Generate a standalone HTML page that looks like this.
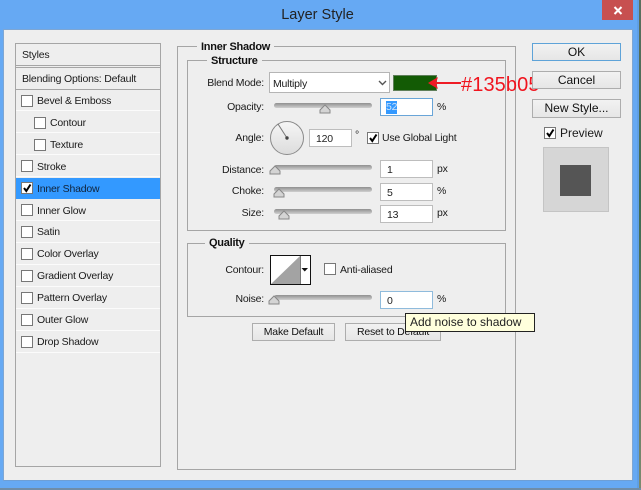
<!DOCTYPE html>
<html><head><meta charset="utf-8"><style>
*{box-sizing:border-box}
html,body{margin:0;padding:0}
body{width:641px;height:490px;position:relative;overflow:hidden;background:#66a9f3;font:10.5px "Liberation Sans",sans-serif;letter-spacing:-.2px;color:#1a1a1a}
div,span{position:absolute}
.t{white-space:nowrap;line-height:14px;height:14px}
.r{text-align:right;width:90px}
.b{font-weight:bold;font-size:11px;letter-spacing:-.25px;background:#eeeeee;padding:0 4px;color:#111}
.big{letter-spacing:0;font-size:12px}
.row{left:16px;width:144px;height:22px;border-bottom:1px solid #fbfbfb}
.cb{width:12px;height:12px;background:#fff;border:1px solid #777}
.g{border:1px solid #a5a5a5}
.inp{background:#fff;border:1px solid #bdbdbd;width:53px;height:18px;padding:2px 0 0 6px;line-height:14px;color:#222}
.btn{border:1px solid #adadad;background:linear-gradient(#f2f2f2,#e6e6e6);text-align:center;color:#111}
.track{left:274px;width:98px;height:5px;border-radius:3px;background:linear-gradient(#8f8f8f,#b5b5b5 60%,#cfcfcf)}
svg{position:absolute;overflow:visible}
</style></head><body>
<div style="left:637px;top:0;width:2px;height:490px;background:#5f9fe6"></div>
<div style="left:639px;top:0;width:2px;height:490px;background:linear-gradient(#5b6f5f,#3c6a50 40%,#7c8a70)"></div>
<div style="left:0;top:488px;width:641px;height:2px;background:#6f8da8"></div>
<div class="t" style="left:0;width:635px;top:6px;height:18px;line-height:18px;text-align:center;font-size:14.5px;letter-spacing:0;color:#222">Layer Style</div>
<div style="left:602px;top:0;width:31px;height:20px;background:#c75050"></div>
<svg style="left:613px;top:6px" width="10" height="9"><path d="M1.500 1L8.500 8M8.500 1L1.500 8" stroke="#fff" stroke-width="2"/></svg>
<div style="left:3px;top:29px;width:630px;height:452px;background:#eeeeee;border:1px solid #7ea6d3;border-bottom-color:#6d9fd6"></div>

<div class="g" style="left:15px;top:43px;width:146px;height:424px"></div>
<div class="t" style="left:22px;top:48px">Styles</div>
<div style="left:16px;top:65px;width:144px;height:1px;background:#a5a5a5"></div>
<div style="left:16px;top:67px;width:144px;height:1px;background:#a5a5a5"></div>
<div class="t" style="left:22px;top:72px">Blending Options: Default</div>
<div style="left:16px;top:89px;width:144px;height:1px;background:#a5a5a5"></div>
<div class="row" style="top:90px;height:21px"></div><div class="cb" style="left:21px;top:95px"></div><div class="t" style="left:37px;top:94px">Bevel &amp; Emboss</div>
<div class="row" style="top:111px"></div><div class="cb" style="left:34px;top:117px"></div><div class="t" style="left:50px;top:116px">Contour</div>
<div class="row" style="top:133px"></div><div class="cb" style="left:34px;top:139px"></div><div class="t" style="left:50px;top:138px">Texture</div>
<div class="row" style="top:155px"></div><div class="cb" style="left:21px;top:160px"></div><div class="t" style="left:37px;top:160px">Stroke</div>
<div style="left:16px;top:178px;width:144px;height:21px;background:#3399ff"></div><div class="cb" style="left:21px;top:182px"></div>
<svg style="left:21px;top:182px" width="12" height="12"><path d="M3 6L5.300 9L9.500 2.500" fill="none" stroke="#000" stroke-width="2"/></svg>
<div class="t" style="left:37px;top:182px;color:#10233a">Inner Shadow</div>
<div class="row" style="top:199px"></div><div class="cb" style="left:21px;top:204px"></div><div class="t" style="left:37px;top:204px">Inner Glow</div>
<div class="row" style="top:221px"></div><div class="cb" style="left:21px;top:226px"></div><div class="t" style="left:37px;top:225px">Satin</div>
<div class="row" style="top:243px"></div><div class="cb" style="left:21px;top:248px"></div><div class="t" style="left:37px;top:247px">Color Overlay</div>
<div class="row" style="top:265px"></div><div class="cb" style="left:21px;top:270px"></div><div class="t" style="left:37px;top:269px">Gradient Overlay</div>
<div class="row" style="top:287px"></div><div class="cb" style="left:21px;top:292px"></div><div class="t" style="left:37px;top:291px">Pattern Overlay</div>
<div class="row" style="top:309px"></div><div class="cb" style="left:21px;top:314px"></div><div class="t" style="left:37px;top:313px">Outer Glow</div>
<div class="row" style="top:331px"></div><div class="cb" style="left:21px;top:336px"></div><div class="t" style="left:37px;top:335px">Drop Shadow</div>

<div class="g" style="left:177px;top:46px;width:339px;height:424px"></div>
<div class="t b" style="left:197px;top:40px">Inner Shadow</div>
<div class="g" style="left:187px;top:60px;width:319px;height:171px"></div>
<div class="t b" style="left:207px;top:54px">Structure</div>
<div class="g" style="left:187px;top:243px;width:319px;height:74px"></div>
<div class="t b" style="left:205px;top:236px">Quality</div>

<div class="t r" style="left:174px;top:76px">Blend Mode:</div>
<div style="left:269px;top:72px;width:121px;height:21px;background:#fff;border:1px solid #b5b5b5"></div>
<div class="t" style="left:273px;top:77px">Multiply</div>
<svg style="left:378px;top:80px" width="9" height="6"><path d="M1 1L4.500 4.500L8 1" fill="none" stroke="#555" stroke-width="1.400"/></svg>
<div style="left:393px;top:75px;width:44px;height:16px;background:#135b05;border:1px solid #5f7f5a"></div>
<svg style="left:427px;top:76px" width="36" height="14"><path d="M34 7H6" stroke="#ee1c25" stroke-width="2"/><path d="M1 7L11 1L9 7L11 13Z" fill="#ee1c25"/></svg>
<div class="t" style="left:461px;top:74px;height:22px;line-height:22px;font-size:20px;letter-spacing:.1px;color:#f0141e">#135b05</div>

<div class="t r" style="left:174px;top:100px">Opacity:</div>
<div class="track" style="top:103px"></div>
<svg style="left:319px;top:104px" width="12" height="10"><path d="M1 9V6L6 1L11 6V9Z" fill="#d4d4d4" stroke="#888"/></svg>
<div class="inp" style="left:380px;top:98px;border-color:#69a5d8"></div>
<div style="left:386px;top:101px;width:11px;height:13px;background:#3399ff"></div>
<div class="t" style="left:386px;top:100px;color:#cfe4fa">52</div>
<div class="t" style="left:437px;top:100px">%</div>

<div class="t r" style="left:174px;top:131px">Angle:</div>
<svg style="left:269px;top:120px" width="36" height="36"><defs><linearGradient id="d" x1="0" y1="0" x2="0" y2="1"><stop offset="0" stop-color="#f6f6f6"/><stop offset="1" stop-color="#dcdcdc"/></linearGradient></defs><circle cx="18" cy="18" r="16.500" fill="url(#d)" stroke="#8a8a8a"/><path d="M18 18L9 4" stroke="#777" stroke-width="1"/><circle cx="18" cy="18" r="1.700" fill="#444"/></svg>
<div class="inp" style="left:309px;top:129px;width:43px;padding-left:6px">120</div>
<div class="t" style="left:355px;top:128px">°</div>
<div class="cb" style="left:367px;top:132px"></div>
<svg style="left:367px;top:132px" width="12" height="12"><path d="M3 6L5.300 9L9.500 2.500" fill="none" stroke="#000" stroke-width="2"/></svg>
<div class="t" style="left:382px;top:131px">Use Global Light</div>

<div class="t r" style="left:174px;top:163px">Distance:</div>
<div class="track" style="top:165px"></div>
<svg style="left:269px;top:165px" width="12" height="10"><path d="M1 9V6L6 1L11 6V9Z" fill="#d4d4d4" stroke="#888"/></svg>
<div class="inp" style="left:380px;top:160px">1</div><div class="t" style="left:437px;top:162px">px</div>

<div class="t r" style="left:174px;top:184px">Choke:</div>
<div class="track" style="top:187px"></div>
<svg style="left:273px;top:188px" width="12" height="10"><path d="M1 9V6L6 1L11 6V9Z" fill="#d4d4d4" stroke="#888"/></svg>
<div class="inp" style="left:380px;top:183px">5</div><div class="t" style="left:437px;top:184px">%</div>

<div class="t r" style="left:174px;top:206px">Size:</div>
<div class="track" style="top:209px"></div>
<svg style="left:278px;top:210px" width="12" height="10"><path d="M1 9V6L6 1L11 6V9Z" fill="#d4d4d4" stroke="#888"/></svg>
<div class="inp" style="left:380px;top:205px">13</div><div class="t" style="left:437px;top:206px">px</div>

<div class="t r" style="left:174px;top:263px">Contour:</div>
<div style="left:270px;top:255px;width:41px;height:30px;background:#fff;border:1px solid #111"></div>
<svg style="left:271px;top:256px" width="39" height="28"><path d="M0 28L29 0V28Z" fill="#a3a3a3"/><path d="M29.500 0V28" stroke="#777"/><path d="M30.500 12H37L33.750 15.500Z" fill="#111"/></svg>
<div class="cb" style="left:324px;top:263px"></div>
<div class="t" style="left:340px;top:263px">Anti-aliased</div>

<div class="t r" style="left:174px;top:292px">Noise:</div>
<div class="track" style="top:295px"></div>
<svg style="left:268px;top:295px" width="12" height="10"><path d="M1 9V6L6 1L11 6V9Z" fill="#d4d4d4" stroke="#888"/></svg>
<div class="inp" style="left:380px;top:291px;border-color:#8fbbdc">0</div><div class="t" style="left:437px;top:292px">%</div>

<div class="btn t" style="left:252px;top:323px;width:83px;height:18px;line-height:16px">Make Default</div>
<div class="btn t" style="left:345px;top:323px;width:96px;height:18px;line-height:16px">Reset to Default</div>
<div class="t big" style="left:405px;top:313px;width:130px;height:19px;line-height:17px;background:#ffffdc;border:1px solid #222;padding-left:4px;color:#222">Add noise to shadow</div>

<div class="btn t big" style="left:532px;top:43px;width:89px;height:18px;line-height:16px;border-color:#5ea3d8">OK</div>
<div class="btn t big" style="left:532px;top:71px;width:89px;height:18px;line-height:16px">Cancel</div>
<div class="btn t big" style="left:532px;top:99px;width:89px;height:19px;line-height:17px">New Style...</div>
<div class="cb" style="left:544px;top:127px"></div>
<svg style="left:544px;top:127px" width="12" height="12"><path d="M3 6L5.300 9L9.500 2.500" fill="none" stroke="#000" stroke-width="2"/></svg>
<div class="t big" style="left:560px;top:126px">Preview</div>
<div style="left:543px;top:147px;width:66px;height:65px;background:#d6d6d6;border:1px solid #c4c4c4"></div>
<div style="left:560px;top:165px;width:31px;height:31px;background:#555"></div>
</body></html>
